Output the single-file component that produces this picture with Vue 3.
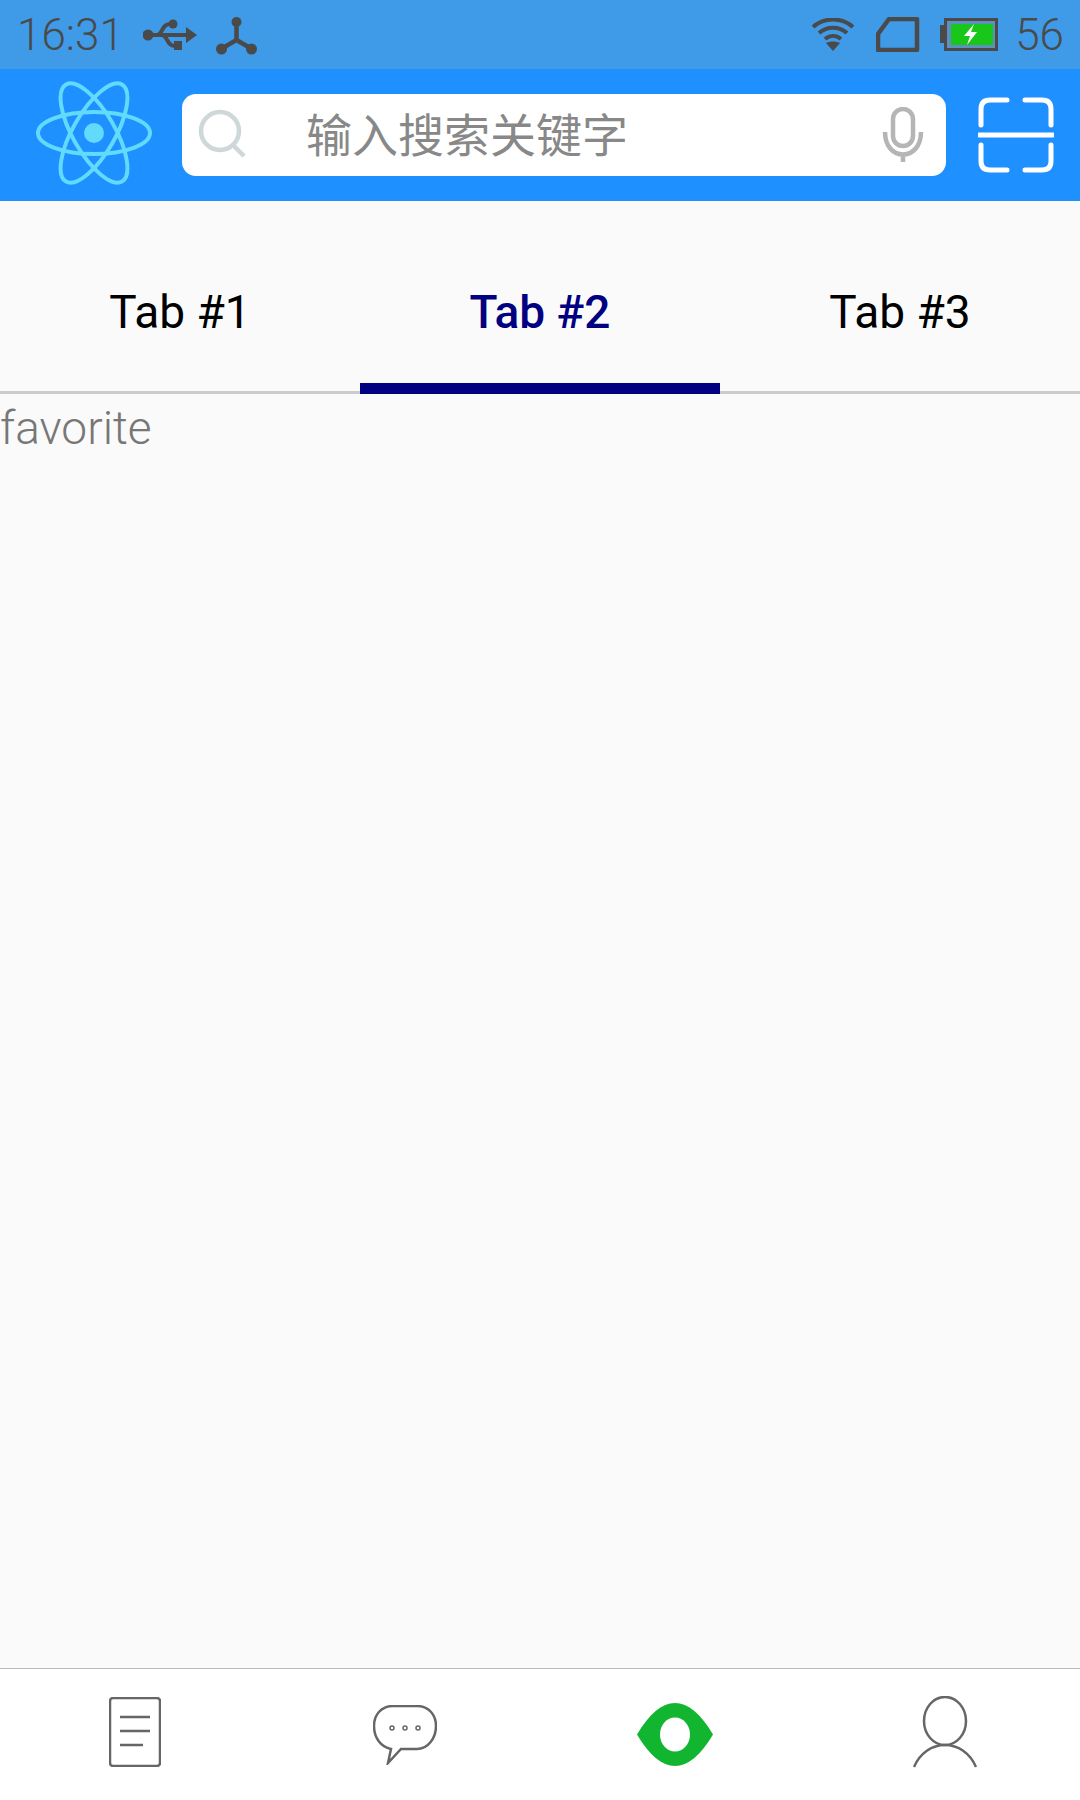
<template>
  <div class="page">
    <div class="status-bar">
      <span class="status-time">16:31</span>
      <svg class="usb" width="54" height="34" viewBox="0 0 54 34">
        <circle cx="5" cy="17" r="5.5" />
        <path d="M5 17H45" class="dark-line" />
        <path d="M54 17L43 9V25Z" />
        <path d="M14 17C20 17 18 6 27 6" class="dark-line" />
        <circle cx="30" cy="6" r="4.5" />
        <path d="M19 17C25 17 23 28 32 28" class="dark-line" />
        <rect x="31" y="23" width="8" height="9" />
      </svg>
      <svg class="hub" width="41" height="38" viewBox="0 0 41 38">
        <path d="M20.5 5V23L5 32M20.5 23L36 32" class="dark-line thick" />
        <circle cx="20.5" cy="5" r="5" />
        <circle cx="5.5" cy="32" r="5.5" />
        <circle cx="35.5" cy="32" r="5.5" />
      </svg>
      <div class="status-spacer"></div>
      <svg class="wifi" width="44" height="34" viewBox="0 0 44 34">
        <path d="M2 9C13 -1 31 -1 42 9M8 15C16 8 28 8 36 15M14 21C19 17 25 17 30 21" class="dark-line" />
        <path d="M15 25C19 23 25 23 29 25L22 33Z" />
      </svg>
      <svg class="sim" width="44" height="35" viewBox="0 0 44 35">
        <path d="M13 2H41V33H2V17Z" class="sim-outline" />
      </svg>
      <svg class="battery" width="58" height="33" viewBox="0 0 58 33">
        <rect x="0" y="7" width="5" height="18" fill="#4a4a4a" />
        <rect x="5.5" y="1.5" width="51" height="30" fill="#5d8fc0" stroke="#4a4a4a" stroke-width="3" />
        <rect x="11" y="6" width="42" height="21" fill="#19c71b" />
        <path d="M34 6L24 18H30L27 27L37 14H31Z" fill="#fff" />
      </svg>
      <span class="status-level">56</span>
    </div>

    <header class="app-header">
      <svg class="logo" width="120" height="108" viewBox="-60 -52 120 108">
        <g fill="none" stroke="#61dafb" stroke-width="4">
          <ellipse rx="56" ry="21" />
          <ellipse rx="56" ry="21" transform="rotate(60)" />
          <ellipse rx="56" ry="21" transform="rotate(120)" />
        </g>
        <circle r="10" fill="#61dafb" />
      </svg>
      <div class="search-box">
        <svg class="search-icon" width="50" height="52" viewBox="0 0 50 52">
          <circle cx="22" cy="22" r="19" />
          <path d="M35 36L46 47" />
        </svg>
        <span class="search-placeholder">输入搜索关键字</span>
        <svg class="mic" width="42" height="56" viewBox="0 0 42 56">
          <rect x="11" y="2" width="20" height="37" rx="10" />
          <path d="M3 25C3 55 39 55 39 25M21 47V55" />
        </svg>
      </div>
      <svg class="scan" width="76" height="76" viewBox="0 0 76 76">
        <path d="M3 28V12C3 6 6 3 12 3H29M47 3H64C70 3 73 6 73 12V28M3 48V64C3 70 6 73 12 73H29M47 73H64C70 73 73 70 73 64V48M1 38H75" />
      </svg>
    </header>

    <nav class="tabs">
      <div
        v-for="(tab, i) in tabs"
        :key="tab"
        class="tab"
        :class="{ active: i === activeTab }"
        @click="activeTab = i"
      >
        {{ tab }}
      </div>
    </nav>

    <main class="content">favorite</main>

    <footer class="bottom-nav">
      <div class="nav-item">
        <svg width="52" height="70" viewBox="0 0 52 70" class="nav-icon lift">
          <rect x="1" y="1" width="50" height="68" rx="3" />
          <path d="M11 20H41M11 34H41M11 48H34" />
        </svg>
      </div>
      <div class="nav-item">
        <svg width="64" height="60" viewBox="0 0 64 60" class="nav-icon">
          <path d="M20 1H44C55 1 63 9 63 21C63 33 55 44 44 44H28L15 58L18 44C8 42 1 33 1 21C1 9 9 1 20 1Z" />
          <g class="chat-dots">
            <circle cx="19" cy="23" r="2" />
            <circle cx="32" cy="23" r="2" />
            <circle cx="45" cy="23" r="2" />
          </g>
        </svg>
      </div>
      <div class="nav-item">
        <svg width="76" height="63" viewBox="0 0 76 63" class="eye">
          <path d="M0 31.5C12 11 25 0 38 0C51 0 64 11 76 31.5C64 52 51 63 38 63C25 63 12 52 0 31.5Z" fill="#12b530" />
          <ellipse cx="38" cy="31.5" rx="15" ry="17" fill="#fff" />
        </svg>
      </div>
      <div class="nav-item">
        <svg width="64" height="72" viewBox="0 0 64 72" class="nav-icon lift">
          <ellipse cx="32" cy="25" rx="21" ry="24" />
          <path d="M1 71C7 57 19 49 32 49C45 49 57 57 63 71" />
        </svg>
      </div>
    </footer>
  </div>
</template>

<script setup>
import { ref } from 'vue';

const tabs = ['Tab #1', 'Tab #2', 'Tab #3'];
const activeTab = ref(1);
</script>

<style>
html,
body {
  margin: 0;
  background: #fafafa;
}
</style>

<style scoped>
.page {
  width: 1080px;
  height: 1800px;
  display: flex;
  flex-direction: column;
  background: #fafafa;
  font-family: Roboto, "Noto Sans CJK SC", sans-serif;
  overflow: hidden;
}

.status-bar {
  height: 69px;
  flex-shrink: 0;
  display: flex;
  align-items: center;
  padding: 0 16px 0 17px;
  box-sizing: border-box;
  background: #3f9ae8;
  color: #4a4a4a;
  fill: #4a4a4a;
  font-size: 44px;
  font-weight: 300;
}

.status-spacer {
  flex: 1;
}

.status-time {
  width: 126px;
}

.usb {
  margin-right: 19px;
}

.hub {
  margin-top: 2px;
}

.dark-line {
  fill: none;
  stroke: #4a4a4a;
  stroke-width: 4;
}

.dark-line.thick {
  stroke-width: 4.5;
}

.wifi {
  margin-right: 21px;
}

.sim {
  margin-right: 20px;
}

.sim-outline {
  fill: none;
  stroke: #4a4a4a;
  stroke-width: 4.5;
  stroke-linejoin: round;
}

.battery {
  margin-right: 17px;
}

.app-header {
  height: 132px;
  flex-shrink: 0;
  display: flex;
  align-items: center;
  padding: 0 26px 0 34px;
  box-sizing: border-box;
  background: #1e90ff;
}

.logo {
  margin-right: 28px;
}

.search-box {
  width: 764px;
  height: 82px;
  display: flex;
  align-items: center;
  padding: 0 22px 0 16px;
  box-sizing: border-box;
  border-radius: 14px;
  background: #fff;
}

.search-icon {
  fill: none;
  stroke: #cfd8d8;
  stroke-width: 4.5;
  margin-right: 58px;
}

.search-placeholder {
  flex: 1;
  padding-bottom: 6px;
  font-size: 46px;
  color: #888;
}

.mic {
  fill: none;
  stroke: #b5b5b5;
  stroke-width: 4.5;
}

.scan {
  margin-left: auto;
  fill: none;
  stroke: #fff;
  stroke-width: 5;
  stroke-linecap: round;
}

.tabs {
  height: 193px;
  flex-shrink: 0;
  display: flex;
  box-sizing: border-box;
  border-bottom: 3px solid #ccc;
}

.tab {
  flex: 1;
  height: 193px;
  box-sizing: border-box;
  padding-top: 76px;
  font-size: 46px;
  line-height: 70px;
  text-align: center;
  color: #000;
}

.tab.active {
  font-weight: 500;
  color: #000080;
  border-bottom: 11px solid #000080;
}

.content {
  flex: 1;
  font-size: 46px;
  font-weight: 300;
  line-height: 68px;
  color: #777;
}

.bottom-nav {
  height: 132px;
  flex-shrink: 0;
  display: flex;
  box-sizing: border-box;
  border-top: 1px solid #bbb;
  background: #fff;
}

.nav-item {
  flex: 1;
  display: flex;
  align-items: center;
  justify-content: center;
}

.nav-icon {
  fill: none;
  stroke: #666;
  stroke-width: 2.5;
}

.chat-dots {
  stroke-width: 1.5;
}

.lift {
  margin-bottom: 5px;
}

.eye {
  margin-bottom: 1px;
}
</style>
